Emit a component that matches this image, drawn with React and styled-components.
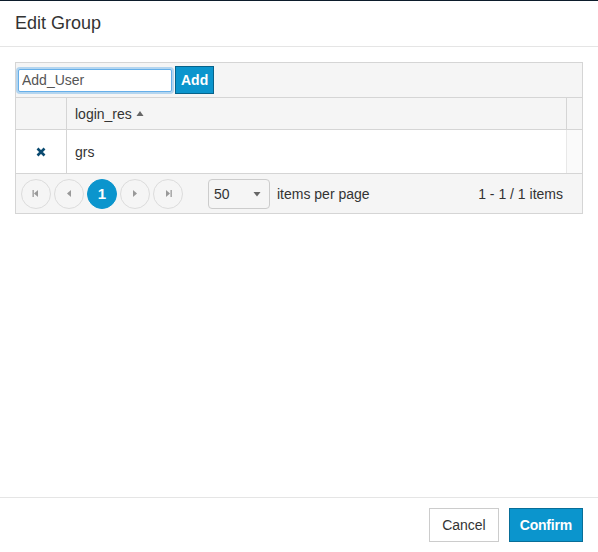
import React from 'react';
import styled, { createGlobalStyle } from 'styled-components';

const Global = createGlobalStyle`
  html, body { margin: 0; padding: 0; background: #fff; }
  body { font-family: "Liberation Sans", Arial, sans-serif; font-size: 14px; color: #333; }
  * { box-sizing: border-box; }
`;

const Modal = styled.div`
  height: 552px;
  display: flex;
  flex-direction: column;
  border-top: 1px solid #0c1c2b;
`;

const Header = styled.div`
  height: 46px;
  border-bottom: 1px solid #e5e5e5;
  padding: 0 15px;
  display: flex;
  align-items: center;
  h4 {
    margin: 0;
    font-size: 18px;
    font-weight: normal;
    color: #333;
    padding-bottom: 1px;
  }
`;

const Body = styled.div`
  flex: 1;
  padding: 15px;
`;

const Grid = styled.div`
  border: 1px solid #d5d5d5;
  background: #f5f5f5;
`;

const Toolbar = styled.div`
  height: 35px;
  display: flex;
  align-items: center;
  gap: 3px;
  padding: 0 2px;
  border-bottom: 1px solid #d5d5d5;
`;

const Input = styled.input`
  width: 154px;
  height: 23px;
  border: 1px solid #66afe9;
  border-radius: 2px;
  box-shadow: 0 0 0 2px rgba(102, 175, 233, 0.45);
  outline: none;
  font-family: inherit;
  font-size: 14px;
  color: #555;
  padding: 0 3px;
  margin: 0;
`;

const SmallBtn = styled.button`
  height: 28px;
  padding: 0 5px;
  background: #0b95cd;
  border: 1px solid #06628a;
  color: #fff;
  font-family: inherit;
  font-weight: bold;
  font-size: 14px;
`;

const Row = styled.div`
  display: flex;
  height: ${p => p.$h}px;
  background: ${p => (p.$head ? '#f5f5f5' : '#fff')};
  border-bottom: 1px solid #d5d5d5;
`;

const Cell = styled.div`
  display: flex;
  align-items: center;
  justify-content: ${p => (p.$center ? 'center' : 'flex-start')};
  width: ${p => (p.$w ? `${p.$w}px` : 'auto')};
  flex: ${p => (p.$w ? 'none' : 1)};
  padding: ${p => (p.$center ? '0' : '0 8px')};
  border-right: 1px solid ${p => (p.$last ? 'transparent' : '#d5d5d5')};
  gap: 4px;
  color: #333;
`;

const Scroll = styled.div`
  width: 16px;
  border-left: 1px solid ${p => (p.$head ? '#d5d5d5' : '#e8e8e8')};
  background: ${p => (p.$head ? '#f5f5f5' : '#fafafa')};
`;

const Pager = styled.div`
  height: 39px;
  display: flex;
  align-items: center;
  padding: 0 19px 0 5px;
`;

const PageBtn = styled.div`
  width: 30px;
  height: 30px;
  border-radius: 50%;
  border: 1px solid ${p => (p.$active ? '#0b95cd' : '#dcdcdc')};
  background: ${p => (p.$active ? '#0b95cd' : 'transparent')};
  color: #fff;
  font-weight: bold;
  font-size: 15px;
  display: flex;
  align-items: center;
  justify-content: center;
  margin-right: 3px;
`;

const Select = styled.div`
  width: 62px;
  height: 30px;
  margin-left: 22px;
  border: 1px solid #ccc;
  border-radius: 4px;
  background: #f5f5f5;
  display: flex;
  align-items: center;
  justify-content: space-between;
  padding: 0 8px 0 5px;
  color: #333;
`;

const PerPage = styled.span`
  margin-left: 7px;
  color: #333;
`;

const Info = styled.span`
  margin-left: auto;
  color: #333;
`;

const Footer = styled.div`
  border-top: 1px solid #e5e5e5;
  padding: 10px 15px;
  display: flex;
  justify-content: flex-end;
  gap: 10px;
`;

const Button = styled.button`
  height: 34px;
  padding: 0 12px;
  font-family: inherit;
  font-size: 14px;
  border: 1px solid ${p => (p.$primary ? '#086e98' : '#ccc')};
  background: ${p => (p.$primary ? '#0b95cd' : '#fff')};
  color: ${p => (p.$primary ? '#fff' : '#333')};
  font-weight: ${p => (p.$primary ? 600 : 'normal')};
  letter-spacing: ${p => (p.$primary ? '-0.2px' : '0')};
  padding: ${p => (p.$primary ? '0 10px' : '0 12px')};
`;

const Tri = ({ dir = 'left', bar }) => {
  const pts = dir === 'left' ? '6,1 6,8 2,4.5' : '2,1 2,8 6,4.5';
  const bx = dir === 'left' ? 0.5 : 6.5;
  return (
    <svg width="8" height="9" viewBox="0 0 8 9">
      <polygon points={pts} fill="#999" />
      {bar && <rect x={bx} y="1" width="1.3" height="7" fill="#999" />}
    </svg>
  );
};

const Cross = () => (
  <svg width="10" height="10" viewBox="0 0 10 10">
    <path d="M1.5 1.5 L8.5 8.5 M8.5 1.5 L1.5 8.5" stroke="#0a4a70" strokeWidth="2.6" strokeLinecap="butt" />
  </svg>
);

export default function App() {
  return (
    <>
      <Global />
      <Modal>
        <Header>
          <h4>Edit Group</h4>
        </Header>
        <Body>
          <Grid>
            <Toolbar>
              <Input defaultValue="Add_User" />
              <SmallBtn>Add</SmallBtn>
            </Toolbar>
            <Row $head $h={32}>
              <Cell $w={51} $center />
              <Cell $last>
                login_res
                <svg width="8" height="7" viewBox="0 0 8 7">
                  <polygon points="4,1 7.5,6 0.5,6" fill="#666" />
                </svg>
              </Cell>
              <Scroll $head />
            </Row>
            <Row $h={44}>
              <Cell $w={51} $center>
                <Cross />
              </Cell>
              <Cell $last>grs</Cell>
              <Scroll />
            </Row>
            <Pager>
              <PageBtn><Tri dir="left" bar /></PageBtn>
              <PageBtn><Tri dir="left" /></PageBtn>
              <PageBtn $active>1</PageBtn>
              <PageBtn><Tri dir="right" /></PageBtn>
              <PageBtn><Tri dir="right" bar /></PageBtn>
              <Select>
                <span>50</span>
                <svg width="8" height="6" viewBox="0 0 8 6">
                  <polygon points="0.5,1 7.5,1 4,5.5" fill="#666" />
                </svg>
              </Select>
              <PerPage>items per page</PerPage>
              <Info>1 - 1 / 1 items</Info>
            </Pager>
          </Grid>
        </Body>
        <Footer>
          <Button>Cancel</Button>
          <Button $primary>Confirm</Button>
        </Footer>
      </Modal>
    </>
  );
}
